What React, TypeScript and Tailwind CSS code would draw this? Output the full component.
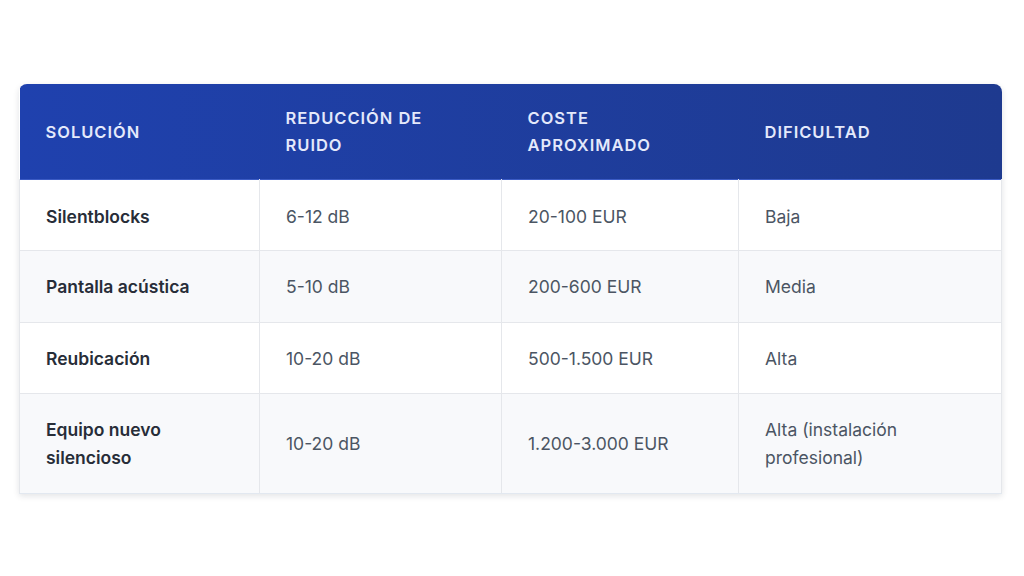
const rows = [
  { name: 'Silentblocks', noise: '6-12 dB', cost: '20-100 EUR', diff: 'Baja' },
  { name: 'Pantalla acústica', noise: '5-10 dB', cost: '200-600 EUR', diff: 'Media' },
  { name: 'Reubicación', noise: '10-20 dB', cost: '500-1.500 EUR', diff: 'Alta' },
  { name: 'Equipo nuevo silencioso', noise: '10-20 dB', cost: '1.200-3.000 EUR', diff: 'Alta (instalación profesional)' },
];

export default function App() {
  return (
    <div className="w-[1024px] h-[576px] bg-white pt-[84px] pl-[19px] font-['Inter',sans-serif]">
      <div className="w-[983px] rounded-t-lg overflow-hidden shadow-[0_2px_6px_rgba(15,23,42,0.12)] border-b border-[#e2e8f0]">
        <table className="w-full border-collapse table-fixed">
          <colgroup>
            <col className="w-[240px]" />
            <col className="w-[242px]" />
            <col className="w-[237px]" />
            <col />
          </colgroup>
          <thead>
            <tr className="bg-gradient-to-r from-[#1f41ae] to-[#1e3a8f] h-[95px] border-b border-[#3b5bc4]">
              <th className="text-left align-middle px-[26px] pt-[2px] text-[16.5px] leading-[27px] font-semibold tracking-[0.06em] text-[#e4e9fb]">SOLUCIÓN</th>
              <th className="text-left align-middle px-[26px] pt-[2px] text-[16.5px] leading-[27px] font-semibold tracking-[0.06em] text-[#e4e9fb]">REDUCCIÓN DE RUIDO</th>
              <th className="text-left align-middle px-[26px] pt-[2px] text-[16.5px] leading-[27px] font-semibold tracking-[0.06em] text-[#e4e9fb]">COSTE APROXIMADO</th>
              <th className="text-left align-middle px-[26px] pt-[2px] text-[16.5px] leading-[27px] font-semibold tracking-[0.06em] text-[#e4e9fb]">DIFICULTAD</th>
            </tr>
          </thead>
          <tbody>
            {rows.map((r, i) => (
              <tr key={r.name} className={`${i % 2 === 1 ? 'bg-[#f8f9fb]' : 'bg-white'} ${i === 3 ? 'h-[100px]' : i === 1 ? 'h-[72px]' : 'h-[71px]'} ${i > 0 ? 'border-t border-[#e5e7eb]' : ''}`}>
                <td className={`pl-[26px] pr-[40px] text-[17.5px] leading-[28px] font-semibold text-[#272d38] border-l border-[#e5e7eb] ${i === 0 ? 'pt-[4px]' : 'pt-[2px]'}`}>{r.name}</td>
                <td className={`px-[26px] text-[17.5px] leading-[28px] text-[#4b5563] border-l border-[#e5e7eb] ${i === 0 ? 'pt-[4px]' : 'pt-[2px]'}`}>{r.noise}</td>
                <td className={`px-[26px] text-[17.5px] leading-[28px] text-[#4b5563] border-l border-[#e5e7eb] ${i === 0 ? 'pt-[4px]' : 'pt-[2px]'}`}>{r.cost}</td>
                <td className={`pl-[26px] pr-[40px] text-[17.5px] leading-[28px] text-[#4b5563] border-l border-r border-[#e5e7eb] ${i === 0 ? 'pt-[4px]' : 'pt-[2px]'}`}>{r.diff}</td>
              </tr>
            ))}
          </tbody>
        </table>
      </div>
    </div>
  );
}
